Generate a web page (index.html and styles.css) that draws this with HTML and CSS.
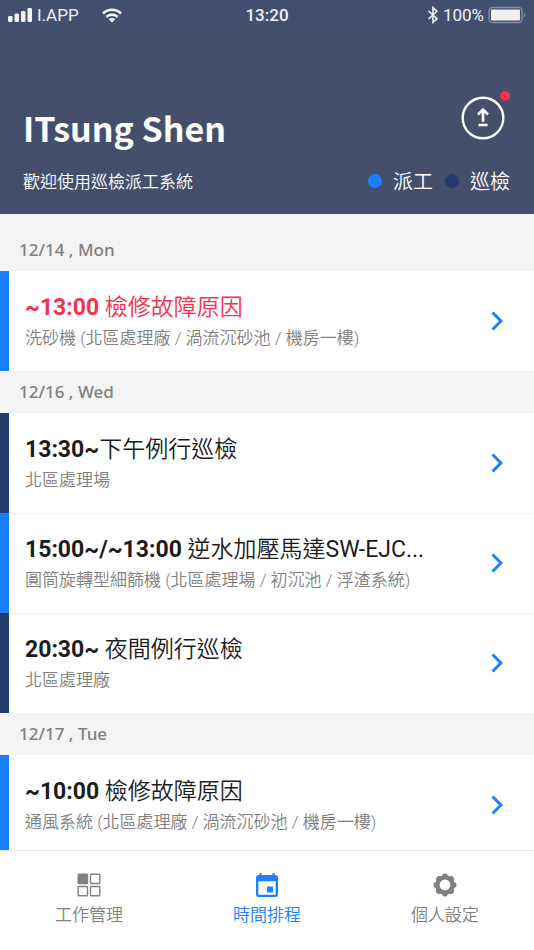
FILE: index.html
```html
<!DOCTYPE html>
<html lang="zh-Hant">
<head>
<meta charset="utf-8">
<meta name="viewport" content="width=device-width, initial-scale=1">
<title>時間排程</title>
<link rel="stylesheet" href="styles.css">
</head>
<body>
<svg class="defs" aria-hidden="true">
  <symbol id="chevron" viewBox="0 0 12 20"><path d="M1.500 1.500 10 10l-8.500 8.500" fill="none" stroke="currentColor" stroke-width="3"/></symbol>
</svg>
<div class="status">
  <div class="status-left">
    <svg width="25" height="16" viewBox="0 0 25 16" fill="currentColor" aria-hidden="true"><rect x="0" y="9" width="4.500" height="6" rx="1.300"/><rect x="6.500" y="6.500" width="4.500" height="8.500" rx="1.300"/><rect x="13" y="4" width="4.500" height="11" rx="1.300"/><rect x="19.500" y="1" width="4.500" height="14" rx="1.300"/></svg>
    <span class="carrier">I.APP</span>
    <svg class="wifi" width="20" height="15" viewBox="0 0 20 15" aria-hidden="true"><g fill="none" stroke="currentColor" stroke-width="2.600"><path d="M.9 5.500a12.900 12.900 0 0 1 18.200 0"/><path d="M4.300 9a8.100 8.100 0 0 1 11.400 0"/></g><path d="M6.700 11.300a4.700 4.700 0 0 1 6.600 0L10 14.600z" fill="currentColor"/></svg>
  </div>
  <span class="clock">13:20</span>
  <div class="status-right">
    <svg width="12" height="18" viewBox="0 0 12 18" fill="none" stroke="currentColor" stroke-width="1.600" aria-hidden="true"><path d="M1.500 5 10 12.700 6 16.300V1.700l4 3.600L1.500 13"/></svg>
    <span>100%</span>
    <svg width="38" height="18" viewBox="0 0 38 18" aria-hidden="true"><rect x="1" y="1.500" width="33" height="15" rx="3.500" fill="none" stroke="#8790a4" stroke-width="1.300"/><rect x="3" y="3.500" width="29" height="11" rx="1" fill="#f0f0f0"/><path d="M35.800 6.500c2 .8 2 4.200 0 5z" fill="#8790a4"/></svg>
  </div>
</div>
<header class="header">
  <div class="header-row title-row">
    <h1>ITsung Shen</h1>
    <button class="upload" type="button" aria-label="上傳">
      <svg width="44" height="44" viewBox="0 0 44 44" fill="none" stroke="currentColor" aria-hidden="true"><circle cx="22" cy="22" r="20.300" stroke-width="2.400"/><path d="M22 25.800V14M17 18.500l5-5 5 5M17.500 29h9" stroke-width="2.600"/></svg>
      <span class="badge"></span>
    </button>
  </div>
  <div class="header-row">
    <p class="welcome">歡迎使用巡檢派工系統</p>
    <ul class="legend"><li class="dispatch">派工</li><li class="patrol">巡檢</li></ul>
  </div>
</header>
<main class="schedule">
  <section>
    <h2>12/14 , Mon</h2>
    <a class="task dispatch urgent" href="#"><span class="task-body"><span class="task-title"><b>~13:00</b> 檢修故障原因</span><span class="place">洗砂機 (北區處理廠 / 渦流沉砂池 / 機房一樓)</span></span><svg class="chevron" aria-hidden="true"><use href="#chevron"/></svg></a>
  </section>
  <section>
    <h2>12/16 , Wed</h2>
    <a class="task patrol" href="#"><span class="task-body"><span class="task-title"><b>13:30~</b>下午例行巡檢</span><span class="place">北區處理場</span></span><svg class="chevron" aria-hidden="true"><use href="#chevron"/></svg></a>
    <a class="task dispatch" href="#"><span class="task-body"><span class="task-title"><b>15:00~/~13:00</b> 逆水加壓馬達<span class="model">SW-EJC...</span></span><span class="place">圓筒旋轉型細篩機 (北區處理場 / 初沉池 / 浮渣系統)</span></span><svg class="chevron" aria-hidden="true"><use href="#chevron"/></svg></a>
    <a class="task patrol" href="#"><span class="task-body"><span class="task-title"><b>20:30~</b> 夜間例行巡檢</span><span class="place">北區處理廠</span></span><svg class="chevron" aria-hidden="true"><use href="#chevron"/></svg></a>
  </section>
  <section>
    <h2>12/17 , Tue</h2>
    <a class="task dispatch" href="#"><span class="task-body"><span class="task-title"><b>~10:00</b> 檢修故障原因</span><span class="place">通風系統 (北區處理廠 / 渦流沉砂池 / 機房一樓)</span></span><svg class="chevron" aria-hidden="true"><use href="#chevron"/></svg></a>
  </section>
</main>
<nav class="tabs">
  <a href="#"><svg width="24" height="24" viewBox="0 0 24 24" fill="none" stroke="currentColor" stroke-width="1.400" aria-hidden="true"><rect x="1.200" y="1.200" width="9.300" height="9.300" rx=".8" fill="currentColor"/><rect x="13.500" y="1.200" width="9.300" height="9.300" rx=".8"/><rect x="1.200" y="13.500" width="9.300" height="9.300" rx=".8"/><rect x="13.500" y="13.500" width="9.300" height="9.300" rx=".8"/></svg>工作管理</a>
  <a class="active" href="#" aria-current="page"><svg width="24" height="24" viewBox="0 0 24 24" aria-hidden="true"><path fill="currentColor" fill-rule="evenodd" d="M4.500 0h2v2h11V0h2v2h1A2.500 2.500 0 0 1 23 4.500v17a2.500 2.500 0 0 1-2.500 2.500h-17A2.500 2.500 0 0 1 1 21.500v-17A2.500 2.500 0 0 1 3.500 2h1zM3.300 8.300v13.400h17.400V8.300zM12 13.500h6v6h-6z"/></svg>時間排程</a>
  <a href="#"><svg width="24" height="24" viewBox="0 0 24 24" aria-hidden="true"><g fill="currentColor"><path fill-rule="evenodd" d="M12 2.200a9.800 9.800 0 1 0 0 19.600 9.800 9.800 0 0 0 0-19.600zm0 4.400a5.400 5.400 0 1 1 0 10.800 5.400 5.400 0 0 1 0-10.800z"/><path id="tooth" d="M8.800 4 9.900.9Q12 0 14.100.9L15.200 4z"/><use href="#tooth" transform="rotate(45 12 12)"/><use href="#tooth" transform="rotate(90 12 12)"/><use href="#tooth" transform="rotate(135 12 12)"/><use href="#tooth" transform="rotate(180 12 12)"/><use href="#tooth" transform="rotate(225 12 12)"/><use href="#tooth" transform="rotate(270 12 12)"/><use href="#tooth" transform="rotate(315 12 12)"/></g></svg>個人設定</a>
</nav>
</body>
</html>
```
FILE: styles.css
```css
:root {
  --blue: #1a80ff;
  --navy: #233a6c;
  --red: #f5324b;
  --gray: #808080;
}

* {
  box-sizing: border-box;
}

body {
  margin: 0;
  height: 100vh;
  display: flex;
  flex-direction: column;
  background: #fff;
  color: #1c1c1c;
  font-family: Roboto, "Noto Sans CJK TC", sans-serif;
}

h1, h2, p, ul {
  margin: 0;
  padding: 0;
}

a {
  color: inherit;
  text-decoration: none;
}

svg {
  flex: none;
}

.defs {
  position: absolute;
  width: 0;
  height: 0;
}

.status {
  flex: none;
  display: grid;
  grid-template-columns: 1fr auto 1fr;
  align-items: center;
  height: 30px;
  padding: 0 8px;
  background: #425070;
  color: #f0f2f6;
  font-size: 17px;
  line-height: 30px;
}

.status-left, .status-right {
  display: flex;
  align-items: center;
  gap: 4px;
}

.status-right {
  justify-content: flex-end;
}

.wifi {
  margin-left: 19px;
}

.clock {
  font-weight: 500;
}

.header {
  flex: none;
  display: flex;
  flex-direction: column;
  gap: 16px;
  padding: 66px 24px 18px 23px;
  background: #454f6c;
  color: #fff;
}

.header-row {
  display: flex;
  align-items: center;
  justify-content: space-between;
}

.title-row {
  align-items: flex-start;
}

h1 {
  padding-top: 10px;
  font: 700 34px/44px "Noto Sans CJK TC", sans-serif;
}

.upload {
  position: relative;
  width: 44px;
  height: 44px;
  margin-right: 5px;
  padding: 0;
  border: 0;
  background: none;
  color: inherit;
}

.upload svg {
  display: block;
}

.badge {
  position: absolute;
  top: -5px;
  right: -5px;
  width: 10px;
  height: 10px;
  border-radius: 50%;
  background: var(--red);
}

.welcome {
  font: 350 17px/30px "Noto Sans CJK TC", sans-serif;
}

.legend {
  display: flex;
  gap: 12px;
  list-style: none;
  font: 350 20px/30px "Noto Sans CJK TC", sans-serif;
}

.legend li {
  display: flex;
  align-items: center;
  gap: 11px;
}

.legend li::before {
  content: "";
  width: 14px;
  height: 14px;
  border-radius: 50%;
  background: var(--accent);
}

.dispatch {
  --accent: var(--blue);
}

.patrol {
  --accent: var(--navy);
}

.schedule {
  flex: 1;
  min-height: 0;
  overflow-y: auto;
  scrollbar-width: none;
  padding-top: 15px;
  background: #f4f4f4;
}

h2 {
  padding-left: 19px;
  color: var(--gray);
  font: 500 17px/42px "Noto Sans", sans-serif;
}

.task {
  display: flex;
  align-items: center;
  height: 100px;
  padding-right: 31px;
  border-left: 9px solid var(--accent);
  background: #fff;
}

.task + .task {
  box-shadow: inset 0 1px #efefef;
}

.task-body {
  flex: 1;
  min-width: 0;
  display: flex;
  flex-direction: column;
  padding-left: 16px;
}

.task-title {
  font-size: 23px;
  font-weight: 350;
  line-height: 34px;
  white-space: nowrap;
}

.task-title b {
  font-weight: 700;
}

.model {
  font-weight: 400;
}

.urgent .task-title {
  color: var(--red);
}

.place {
  color: var(--gray);
  font: 350 17px/26px Roboto, "Noto Sans CJK TC", sans-serif;
  white-space: nowrap;
}

.chevron {
  width: 12px;
  height: 20px;
  color: var(--blue);
}

.tabs {
  flex: none;
  display: grid;
  grid-template-columns: repeat(3, 1fr);
  height: 100px;
  padding-top: 22px;
  border-top: 1px solid #e4e4e4;
  background: #fff;
}

.tabs a {
  display: flex;
  flex-direction: column;
  align-items: center;
  gap: 4px;
  color: var(--gray);
  font: 350 17px/26px "Noto Sans CJK TC", sans-serif;
}

.tabs .active {
  color: var(--blue);
}
```
